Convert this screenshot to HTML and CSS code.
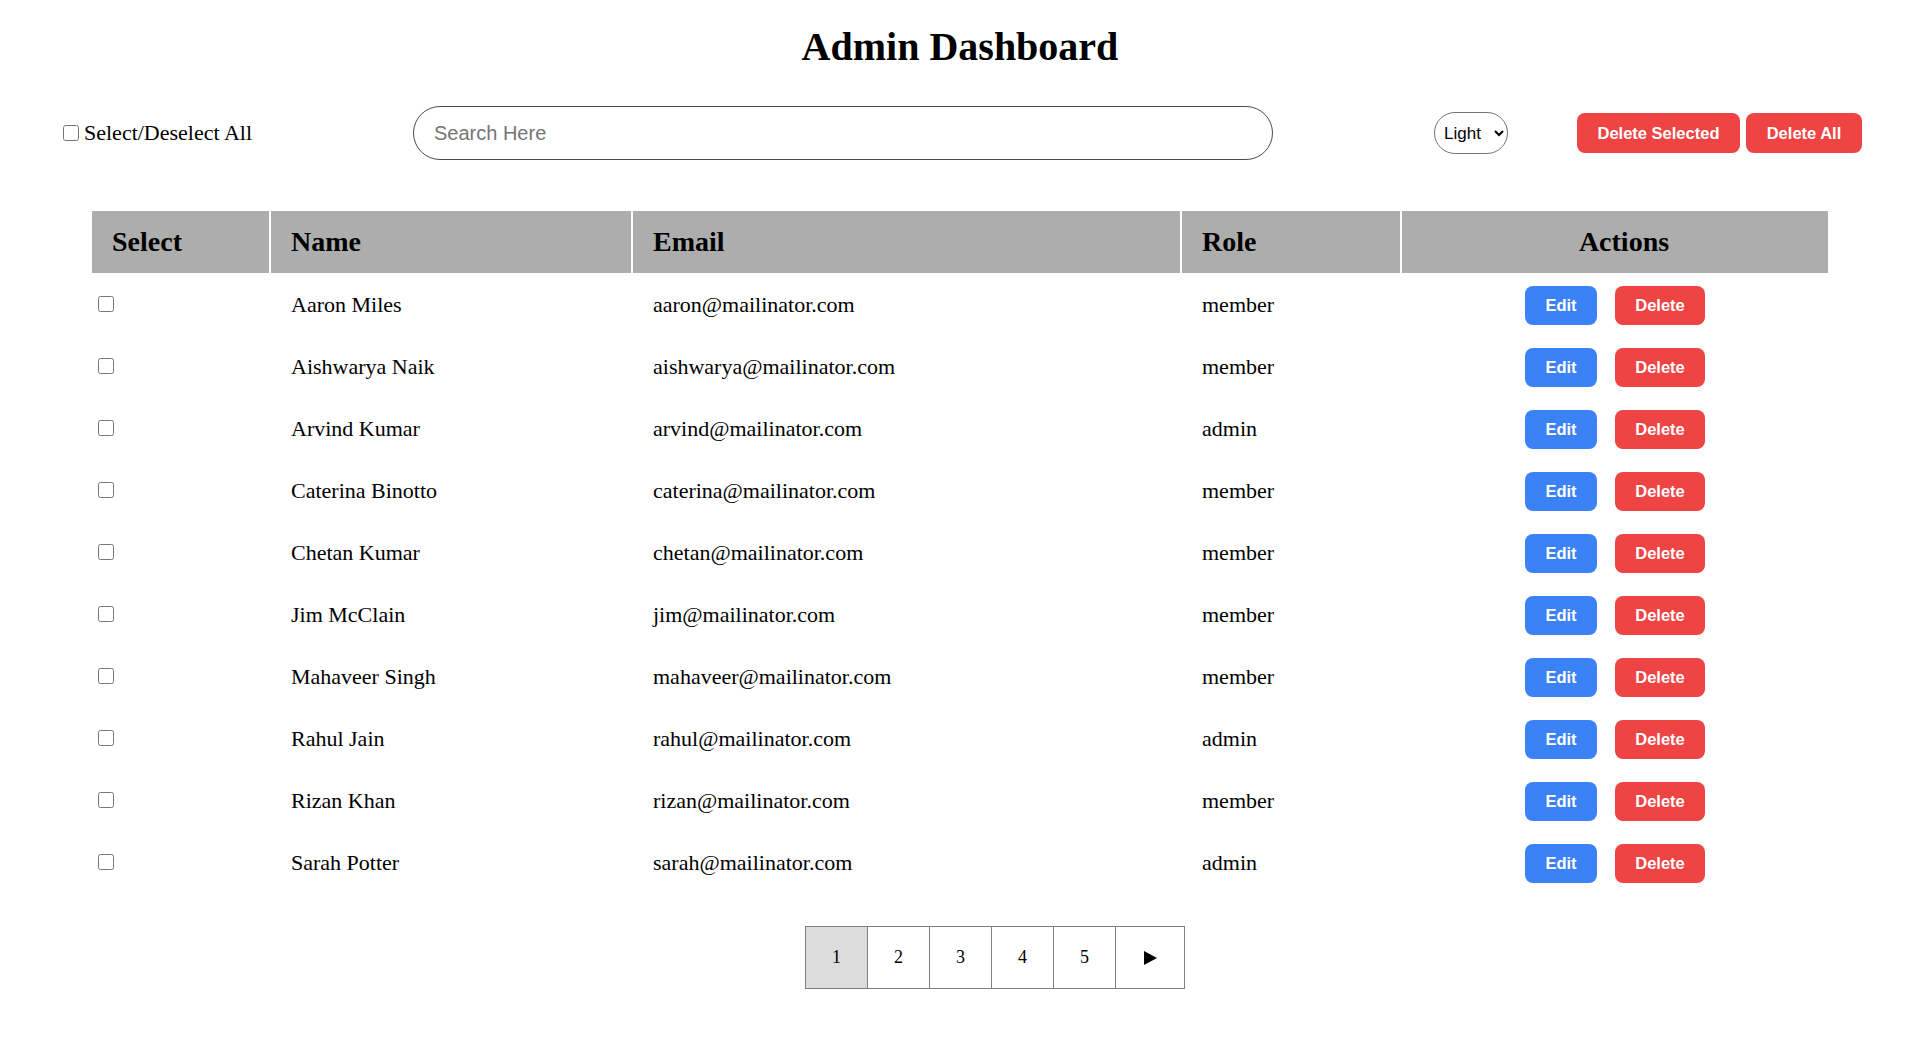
FILE: index.html
```html
<!DOCTYPE html>
<html lang="en">
<head>
<meta charset="utf-8">
<title>Admin Dashboard</title>
<link rel="stylesheet" href="styles.css">
</head>
<body>
<div class="page">
  <h1 class="title">Admin Dashboard</h1>

  <div class="toolbar">
    <label class="select-all"><input type="checkbox" class="cb cb-all">Select/Deselect All</label>
    <input type="text" class="search" placeholder="Search Here">
    <div class="right-group">
      <select class="theme">
        <option>Light</option>
        <option>Dark</option>
      </select>
      <div class="bulk">
        <button class="btn btn-red btn-lg btn-sel">Delete Selected</button>
        <button class="btn btn-red btn-lg btn-all">Delete All</button>
      </div>
    </div>
  </div>

  <table class="users">
    <thead>
      <tr>
        <th class="c-select">Select</th>
        <th class="c-name">Name</th>
        <th class="c-email">Email</th>
        <th class="c-role">Role</th>
        <th class="c-actions">Actions</th>
      </tr>
    </thead>
    <tbody>
      <tr><td class="td-cb"><input type="checkbox" class="cb"></td><td>Aaron Miles</td><td>aaron@mailinator.com</td><td>member</td><td class="td-actions"><div class="actions"><button class="btn btn-blue btn-edit">Edit</button><button class="btn btn-red btn-del">Delete</button></div></td></tr>
      <tr><td class="td-cb"><input type="checkbox" class="cb"></td><td>Aishwarya Naik</td><td>aishwarya@mailinator.com</td><td>member</td><td class="td-actions"><div class="actions"><button class="btn btn-blue btn-edit">Edit</button><button class="btn btn-red btn-del">Delete</button></div></td></tr>
      <tr><td class="td-cb"><input type="checkbox" class="cb"></td><td>Arvind Kumar</td><td>arvind@mailinator.com</td><td>admin</td><td class="td-actions"><div class="actions"><button class="btn btn-blue btn-edit">Edit</button><button class="btn btn-red btn-del">Delete</button></div></td></tr>
      <tr><td class="td-cb"><input type="checkbox" class="cb"></td><td>Caterina Binotto</td><td>caterina@mailinator.com</td><td>member</td><td class="td-actions"><div class="actions"><button class="btn btn-blue btn-edit">Edit</button><button class="btn btn-red btn-del">Delete</button></div></td></tr>
      <tr><td class="td-cb"><input type="checkbox" class="cb"></td><td>Chetan Kumar</td><td>chetan@mailinator.com</td><td>member</td><td class="td-actions"><div class="actions"><button class="btn btn-blue btn-edit">Edit</button><button class="btn btn-red btn-del">Delete</button></div></td></tr>
      <tr><td class="td-cb"><input type="checkbox" class="cb"></td><td>Jim McClain</td><td>jim@mailinator.com</td><td>member</td><td class="td-actions"><div class="actions"><button class="btn btn-blue btn-edit">Edit</button><button class="btn btn-red btn-del">Delete</button></div></td></tr>
      <tr><td class="td-cb"><input type="checkbox" class="cb"></td><td>Mahaveer Singh</td><td>mahaveer@mailinator.com</td><td>member</td><td class="td-actions"><div class="actions"><button class="btn btn-blue btn-edit">Edit</button><button class="btn btn-red btn-del">Delete</button></div></td></tr>
      <tr><td class="td-cb"><input type="checkbox" class="cb"></td><td>Rahul Jain</td><td>rahul@mailinator.com</td><td>admin</td><td class="td-actions"><div class="actions"><button class="btn btn-blue btn-edit">Edit</button><button class="btn btn-red btn-del">Delete</button></div></td></tr>
      <tr><td class="td-cb"><input type="checkbox" class="cb"></td><td>Rizan Khan</td><td>rizan@mailinator.com</td><td>member</td><td class="td-actions"><div class="actions"><button class="btn btn-blue btn-edit">Edit</button><button class="btn btn-red btn-del">Delete</button></div></td></tr>
      <tr><td class="td-cb"><input type="checkbox" class="cb"></td><td>Sarah Potter</td><td>sarah@mailinator.com</td><td>admin</td><td class="td-actions"><div class="actions"><button class="btn btn-blue btn-edit">Edit</button><button class="btn btn-red btn-del">Delete</button></div></td></tr>
    </tbody>
  </table>

  <div class="pager">
    <div class="pages">
      <button class="pg pg-active">1</button>
      <button class="pg">2</button>
      <button class="pg">3</button>
      <button class="pg">4</button>
      <button class="pg">5</button>
      <button class="pg pg-next"><svg width="13" height="14" viewBox="0 0 13 14"><polygon points="0,0 13,7 0,14" fill="#000"/></svg></button>
    </div>
  </div>
</div>
</body>
</html>
```

FILE: styles.css
```css
* {
  box-sizing: border-box;
}

html, body {
  margin: 0;
  padding: 0;
  background: #ffffff;
}

body {
  font-family: "Liberation Serif", "Times New Roman", serif;
  color: #000;
}

.page {
  width: 1920px;
}

.title {
  margin: 0;
  padding-top: 25px;
  font-size: 40px;
  line-height: 44px;
  font-weight: bold;
  text-align: center;
}

.toolbar {
  margin-top: 37px;
  height: 54px;
  padding: 0 58px;
  display: flex;
  align-items: center;
  justify-content: space-between;
}

.select-all {
  display: flex;
  align-items: center;
  font-size: 22px;
  line-height: 26px;
}

.cb {
  width: 16px;
  height: 16px;
  margin: 0;
}

.cb-all {
  margin: 0 5px 0 5px;
}

.search {
  width: 860px;
  height: 54px;
  border: 1px solid #4a4a4a;
  border-radius: 27px;
  padding: 0 20px;
  font-family: "Liberation Sans", Arial, sans-serif;
  font-size: 20px;
  color: #000;
  outline: none;
  background: #fff;
}

.search::placeholder {
  color: #757575;
}

.right-group {
  display: flex;
  align-items: center;
  gap: 69px;
}

.theme {
  width: 74px;
  height: 42px;
  border: 1px solid #767676;
  border-radius: 21px;
  padding: 0 3px 0 5px;
  font-family: "Liberation Sans", Arial, sans-serif;
  font-size: 17px;
  color: #000;
  background: #fff;
}

.bulk {
  display: flex;
  gap: 6px;
}

.btn {
  border: none;
  color: #fff;
  font-family: "Liberation Sans", Arial, sans-serif;
  font-weight: bold;
  font-size: 16.5px;
  line-height: 19px;
  padding: 0;
  border-radius: 8px;
  cursor: pointer;
  text-align: center;
}

.btn-lg {
  height: 40px;
}

.btn-sel { width: 163px; }
.btn-all { width: 116px; }

.btn-red {
  background: #ef4444;
}

.btn-blue {
  background: #3b82f6;
}

.users {
  margin: 49px auto 0;
  width: 1740px;
  table-layout: fixed;
  border-collapse: separate;
  border-spacing: 2px;
}

.users th {
  box-sizing: content-box;
  height: 62px;
  padding: 0 20px;
  background: #adadad;
  font-size: 28px;
  font-weight: bold;
  text-align: left;
  vertical-align: middle;
}

.users th.c-select { width: 137px; }
.users th.c-name { width: 320px; }
.users th.c-email { width: 507px; }
.users th.c-role { width: 178px; }
.users th.c-actions {
  width: 368px;
  padding-left: 38px;
  text-align: center;
}

.users td {
  height: 60px;
  padding: 0 20px;
  font-size: 22px;
  vertical-align: middle;
  white-space: nowrap;
}

.users td.td-cb {
  padding: 0 0 2px 6px;
}

.users td.td-cb .cb {
  display: block;
}

.actions {
  display: flex;
  justify-content: center;
  gap: 18px;
}

.actions .btn {
  height: 39px;
}

.btn-edit { width: 72px; }
.btn-del { width: 90px; }

.pager {
  margin-top: 31px;
  display: flex;
  justify-content: center;
  padding-left: 70px;
}

.pages {
  display: flex;
}

.pg {
  width: 63px;
  height: 63px;
  border: 1px solid #808080;
  margin-left: -1px;
  background: #fff;
  font-family: "Liberation Serif", "Times New Roman", serif;
  font-size: 18px;
  color: #000;
  padding: 0;
  display: flex;
  align-items: center;
  justify-content: center;
  cursor: pointer;
}

.pg:first-child {
  margin-left: 0;
}

.pg-active {
  background: #dcdcdc;
}

.pg-next {
  width: 70px;
}
```
